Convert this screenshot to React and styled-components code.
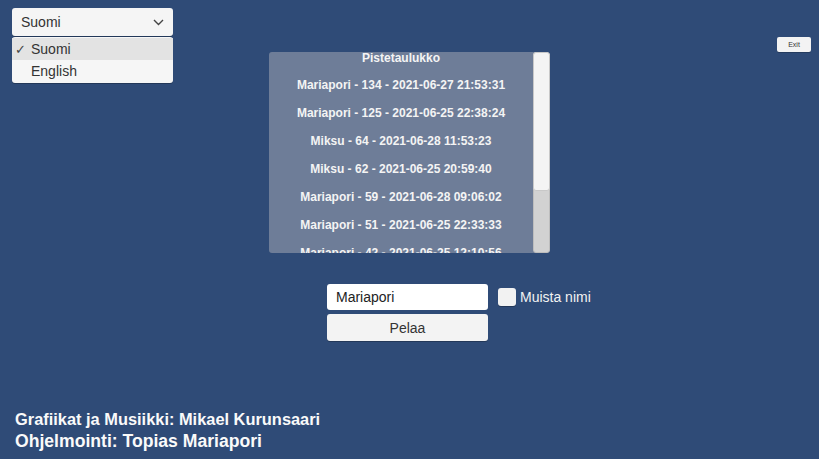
import React, { useState } from 'react';
import styled, { createGlobalStyle } from 'styled-components';

const GlobalStyle = createGlobalStyle`
  html, body {
    margin: 0;
    padding: 0;
    background: #2f4b77;
  }
  * {
    box-sizing: border-box;
  }
`;

const scores = [
  'Mariapori - 134 - 2021-06-27 21:53:31',
  'Mariapori - 125 - 2021-06-25 22:38:24',
  'Miksu - 64 - 2021-06-28 11:53:23',
  'Miksu - 62 - 2021-06-25 20:59:40',
  'Mariapori - 59 - 2021-06-28 09:06:02',
  'Mariapori - 51 - 2021-06-25 22:33:33',
  'Mariapori - 42 - 2021-06-25 12:10:56',
];

const App = () => {
  const [lang, setLang] = useState('Suomi');
  const [name, setName] = useState('Mariapori');
  const [remember, setRemember] = useState(false);

  return (
    <Page>
      <GlobalStyle />
      <Header>
        <DropdownWrap>
          <Dropdown>
            <span>{lang}</span>
            <svg width="11" height="7" viewBox="0 0 11 7">
              <path d="M1 1 L5.5 5.5 L10 1" fill="none" stroke="#444" strokeWidth="1.4" />
            </svg>
          </Dropdown>
          <Menu>
            {['Suomi', 'English'].map((l) => (
              <MenuItem key={l} $active={l === lang} onClick={() => setLang(l)}>
                <Check>{l === lang ? '✓' : ''}</Check>
                {l}
              </MenuItem>
            ))}
          </Menu>
        </DropdownWrap>
        <ExitButton>Exit</ExitButton>
      </Header>

      <Scoreboard>
        <ScoreList>
          <Title>Pistetaulukko</Title>
          {scores.map((s) => (
            <ScoreRow key={s}>{s}</ScoreRow>
          ))}
        </ScoreList>
        <Scrollbar>
          <Handle />
        </Scrollbar>
      </Scoreboard>

      <FormGrid>
        <NameInput value={name} onChange={(e) => setName(e.target.value)} />
        <Remember onClick={() => setRemember(!remember)}>
          <Box>{remember ? '✓' : ''}</Box>
          Muista nimi
        </Remember>
        <PlayButton>Pelaa</PlayButton>
      </FormGrid>

      <Credits>
        <CreditLine $size={16.4}>Grafiikat ja Musiikki: Mikael Kurunsaari</CreditLine>
        <CreditLine $size={17.6}>Ohjelmointi: Topias Mariapori</CreditLine>
      </Credits>
    </Page>
  );
};

const Page = styled.div`
  width: 100vw;
  height: 100vh;
  display: flex;
  flex-direction: column;
  align-items: center;
  background: #2f4b77;
  font-family: 'Liberation Sans', Arial, sans-serif;
  overflow: hidden;
`;

const Header = styled.div`
  width: 100%;
  height: 52px;
  display: flex;
  justify-content: space-between;
  align-items: flex-start;
  padding: 8px 8px 0 12px;
`;

const DropdownWrap = styled.div`
  position: relative;
  width: 161px;
  z-index: 2;
`;

const Dropdown = styled.div`
  height: 28px;
  display: flex;
  align-items: center;
  justify-content: space-between;
  padding: 0 9px 0 9px;
  background: #f5f5f5;
  border-radius: 3px;
  font-size: 14px;
  color: #333;
  box-shadow: 0 1px 0 rgba(0, 0, 0, 0.25);
`;

const Menu = styled.div`
  position: absolute;
  top: 29px;
  left: 0;
  width: 161px;
  padding: 1px 0 1px;
  background: #f6f6f6;
  border-radius: 3px;
  box-shadow: 0 1px 0 rgba(0, 0, 0, 0.25);
`;

const MenuItem = styled.div`
  height: 22px;
  display: flex;
  align-items: center;
  font-size: 14px;
  color: #333;
  background: ${(p) => (p.$active ? '#e3e3e3' : 'transparent')};
  cursor: pointer;
`;

const Check = styled.span`
  width: 19px;
  padding-left: 3px;
  font-size: 13px;
  color: #444;
`;

const ExitButton = styled.button`
  margin-top: 29px;
  width: 34px;
  height: 15px;
  padding: 0;
  border: none;
  border-radius: 2px;
  background: #f3f3f3;
  color: #333;
  font-family: 'Liberation Sans', Arial, sans-serif;
  font-size: 7px;
  box-shadow: 0 1px 0 rgba(0, 0, 0, 0.2);
`;

const Scoreboard = styled.div`
  width: 281px;
  height: 201px;
  display: flex;
  background: #6e7d98;
  border-radius: 3px;
  overflow: hidden;
`;

const ScoreList = styled.div`
  flex: 1;
  text-align: center;
  color: #f4f4f4;
  font-size: 12px;
  font-weight: bold;
  overflow: hidden;
`;

const Title = styled.div`
  line-height: 12px;
  margin-bottom: 7px;
`;

const ScoreRow = styled.div`
  line-height: 28px;
  white-space: nowrap;
`;

const Scrollbar = styled.div`
  width: 17px;
  background: #d2d2d2;
  border: 1px solid #bdbdbd;
  border-radius: 3px;
  display: flex;
  flex-direction: column;
`;

const Handle = styled.div`
  height: 139px;
  margin: -1px;
  background: #f4f4f4;
  border: 1px solid #c8c8c8;
  border-radius: 3px;
`;

const FormGrid = styled.div`
  margin-top: 31px;
  display: grid;
  grid-template-columns: 1fr 161px 1fr;
  grid-template-rows: 26px 27px;
  row-gap: 4px;
  width: 100%;
  padding-right: 4px;
`;

const NameInput = styled.input`
  grid-column: 2;
  grid-row: 1;
  height: 26px;
  border: none;
  border-radius: 3px;
  padding: 0 9px;
  background: #fff;
  color: #222;
  font-family: 'Liberation Sans', Arial, sans-serif;
  font-size: 14px;
  outline: none;
`;

const Remember = styled.label`
  grid-column: 3;
  grid-row: 1;
  display: flex;
  align-items: center;
  gap: 4px;
  padding-left: 10px;
  color: #f2f2f2;
  font-size: 14px;
  cursor: pointer;
`;

const Box = styled.span`
  width: 18px;
  height: 18px;
  border-radius: 3px;
  background: #f2f2f2;
  box-shadow: 0 1px 0 rgba(0, 0, 0, 0.25);
  color: #333;
  font-size: 13px;
  text-align: center;
  line-height: 18px;
`;

const PlayButton = styled.button`
  grid-column: 2;
  grid-row: 2;
  border: none;
  border-radius: 3px;
  background: #f3f3f3;
  color: #333;
  font-family: 'Liberation Sans', Arial, sans-serif;
  font-size: 14px;
  box-shadow: 0 1px 0 rgba(0, 0, 0, 0.25);
  cursor: pointer;
`;

const Credits = styled.div`
  margin-top: auto;
  align-self: flex-start;
  padding: 0 0 7px 15px;
  color: #fafafa;
  font-weight: bold;
`;

const CreditLine = styled.div`
  font-size: ${(p) => p.$size}px;
  line-height: 22px;
  white-space: nowrap;
`;

export default App;
